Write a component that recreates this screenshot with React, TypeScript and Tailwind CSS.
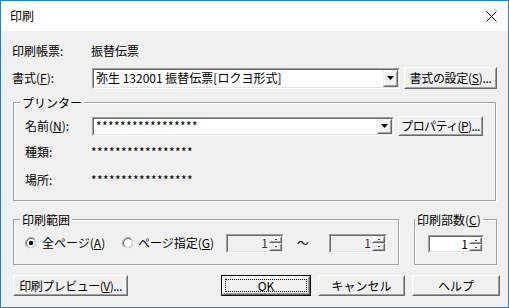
import React from "react";

function Btn({ className = "", children }: { className?: string; children: React.ReactNode }) {
  return (
    <div className={"flex bg-[#f0f0f0] border border-t-white border-l-white border-r-[#696969] border-b-[#696969] " + className}>
      <div className="flex-1 flex items-center justify-center border border-t-[#f0f0f0] border-l-[#f0f0f0] border-r-[#a0a0a0] border-b-[#a0a0a0] leading-none whitespace-nowrap">
        {children}
      </div>
    </div>
  );
}

function Sunken({ className = "", inner = "", children }: { className?: string; inner?: string; children: React.ReactNode }) {
  return (
    <div className={"flex border border-t-[#a0a0a0] border-l-[#a0a0a0] border-r-white border-b-white " + className}>
      <div className={"flex-1 flex border border-t-[#696969] border-l-[#696969] border-r-[#e3e3e3] border-b-[#e3e3e3] " + inner}>
        {children}
      </div>
    </div>
  );
}

function Combo({ className = "", text, stars }: { className?: string; text: string; stars?: boolean }) {
  return (
    <Sunken className={className} inner="bg-white">
      <div className={"flex-1 flex items-center pl-[2px] leading-none whitespace-nowrap overflow-hidden " + (stars ? "tracking-[0.4px]" : "")}>{text}</div>
      <div className="w-[15px] flex bg-[#f0f0f0] border border-t-[#f0f0f0] border-l-[#f0f0f0] border-r-[#696969] border-b-[#696969]">
        <div className="flex-1 flex items-center justify-center border border-t-white border-l-white border-r-[#a0a0a0] border-b-[#a0a0a0]">
          <svg width="7" height="4" viewBox="0 0 7 4">
            <path d="M0 0H7L3.5 4Z" fill="#000" />
          </svg>
        </div>
      </div>
    </Sunken>
  );
}

function SpinHalf() {
  return (
    <div className="flex-1 flex bg-[#f0f0f0] border border-t-[#f0f0f0] border-l-[#f0f0f0] border-r-[#696969] border-b-[#696969]">
      <div className="flex-1 flex items-center justify-center border border-t-white border-l-white border-r-[#a0a0a0] border-b-[#a0a0a0]">
        <div className="w-[2px] h-[1px] bg-[#404040]" />
      </div>
    </div>
  );
}

function Spin({ className = "", enabled }: { className?: string; enabled?: boolean }) {
  return (
    <Sunken className={className} inner={enabled ? "bg-white" : "bg-[#f0f0f0]"}>
      <div className={"flex-1 flex items-center justify-end pr-[1px] leading-none " + (enabled ? "text-black" : "text-[#333]")}>1</div>
      <div className="w-[13px] flex flex-col">
        <SpinHalf />
        <SpinHalf />
      </div>
    </Sunken>
  );
}

function Radio({ checked }: { checked?: boolean }) {
  return (
    <svg width="12" height="12" viewBox="0 0 12 12" className="shrink-0">
      <circle cx="6" cy="6" r="5.5" fill="none" stroke="#a0a0a0" />
      <path d="M9.89 2.11A5.5 5.5 0 0 1 2.11 9.89" fill="none" stroke="#ffffff" />
      <circle cx="6" cy="6" r="4.5" fill="#fff" stroke="#696969" />
      <path d="M9.18 2.82A4.5 4.5 0 0 1 2.82 9.18" fill="none" stroke="#e3e3e3" />
      {checked && <rect x="4" y="4" width="4" height="4" rx="1.2" fill="#000" />}
    </svg>
  );
}

function Group({ className = "", label, labelPos = "left-[6px]", children }: { className?: string; label: React.ReactNode; labelPos?: string; children?: React.ReactNode }) {
  return (
    <div className={"relative border border-[#a0a0a0] shadow-[inset_1px_1px_0_#ffffff,1px_1px_0_#ffffff] " + className}>
      <div className={"absolute top-[-8px] px-[2px] bg-[#f0f0f0] leading-[16px] whitespace-nowrap " + labelPos}>{label}</div>
      {children}
    </div>
  );
}

export default function App() {
  return (
    <div className="w-[509px] h-[308px] flex flex-col border border-[#1883d7] bg-[#f0f0f0] text-[12px] text-black whitespace-nowrap font-['Noto_Sans_CJK_JP','Noto_Sans',sans-serif] overflow-hidden">
      {/* title bar */}
      <div className="h-[30px] bg-white flex items-center justify-between pl-[9px] pr-[11px] shrink-0">
        <span className="leading-none">印刷</span>
        <svg width="11" height="11" viewBox="0 0 11 11">
          <path d="M0.5 0.5L10.5 10.5M10.5 0.5L0.5 10.5" stroke="#000" strokeWidth="1" />
        </svg>
      </div>

      <div className="flex flex-col pl-[11px]">
        {/* row 1 */}
        <div className="mt-[10px] h-[20px] flex items-center leading-none">
          <span className="w-[79px]">印刷帳票:</span>
          <span>振替伝票</span>
        </div>

        {/* row 2 */}
        <div className="mt-[6px] h-[22px] flex items-center">
          <span className="w-[80px] shrink-0 leading-none">
            書式(<u>F</u>):
          </span>
          <Combo className="w-[308px] h-[21px] shrink-0" text="弥生 132001 振替伝票[ロクヨ形式]" />
          <Btn className="ml-[4px] w-[93px] h-[22px] shrink-0 tracking-[-0.3px]">
            書式の設定(<u>S</u>)...
          </Btn>
        </div>

        {/* printer group */}
        <Group className="mt-[13px] ml-[1px] w-[483px] h-[99px]" label="プリンター">
          <div className="flex flex-col pl-[11px] pt-[13px]">
            <div className="h-[20px] flex items-center">
              <span className="w-[67px] shrink-0 leading-none">
                名前(<u>N</u>):
              </span>
              <Combo className="w-[302px] h-[19px] shrink-0" text="*****************" stars />
              <Btn className="ml-[4px] w-[85px] h-[20px] shrink-0 tracking-[-0.6px]">
                プロパティ(<u>P</u>)...
              </Btn>
            </div>
            <div className="mt-[6px] h-[20px] flex items-center leading-none">
              <span className="w-[66px]">種類:</span>
              <span className="tracking-[0.4px]">*****************</span>
            </div>
            <div className="mt-[8px] h-[20px] flex items-center leading-none">
              <span className="w-[66px]">場所:</span>
              <span className="tracking-[0.4px]">*****************</span>
            </div>
          </div>
        </Group>

        {/* range + copies */}
        <div className="mt-[18px] ml-[1px] flex gap-[15px]">
          <Group className="w-[386px] h-[46px] shrink-0" label="印刷範囲">
            <div className="h-full flex items-center pl-[11px] pt-[2px]">
              <Radio checked />
              <span className="ml-[5px] w-[80px] shrink-0 leading-none">
                全ページ(<u>A</u>)
              </span>
              <Radio />
              <span className="ml-[4px] w-[88px] shrink-0 leading-none">
                ページ指定(<u>G</u>)
              </span>
              <Spin className="w-[58px] h-[19px] shrink-0" />
              <span className="ml-[13px] w-[11px] shrink-0 leading-none">～</span>
              <Spin className="ml-[21px] w-[58px] h-[19px] shrink-0" />
            </div>
          </Group>
          <Group className="w-[83px] h-[46px] shrink-0" label={<>印刷部数(<u>C</u>)</>} labelPos="left-[0px]">
            <div className="h-full flex items-center pl-[13px] pt-[3px]">
              <Spin className="w-[56px] h-[18px]" enabled />
            </div>
          </Group>
        </div>

        {/* buttons */}
        <div className="mt-[10px] ml-[1px] flex items-start">
          <Btn className="w-[115px] h-[21px] shrink-0 tracking-[-0.5px]">
            印刷プレビュー(<u>V</u>)...
          </Btn>
          <div className="ml-[93px] w-[90px] h-[21px] shrink-0 flex border border-black">
            <div className="flex-1 flex bg-[#f0f0f0] border border-t-white border-l-white border-r-[#696969] border-b-[#696969]">
              <div className="flex-1 flex p-[1px] border border-t-[#f0f0f0] border-l-[#f0f0f0] border-r-[#a0a0a0] border-b-[#a0a0a0]">
                <div className="flex-1 flex items-center justify-center border border-dotted border-black leading-none">OK</div>
              </div>
            </div>
          </div>
          <Btn className="ml-[7px] w-[87px] h-[21px] shrink-0">キャンセル</Btn>
          <Btn className="ml-[7px] w-[88px] h-[21px] shrink-0">ヘルプ</Btn>
        </div>
      </div>
    </div>
  );
}
